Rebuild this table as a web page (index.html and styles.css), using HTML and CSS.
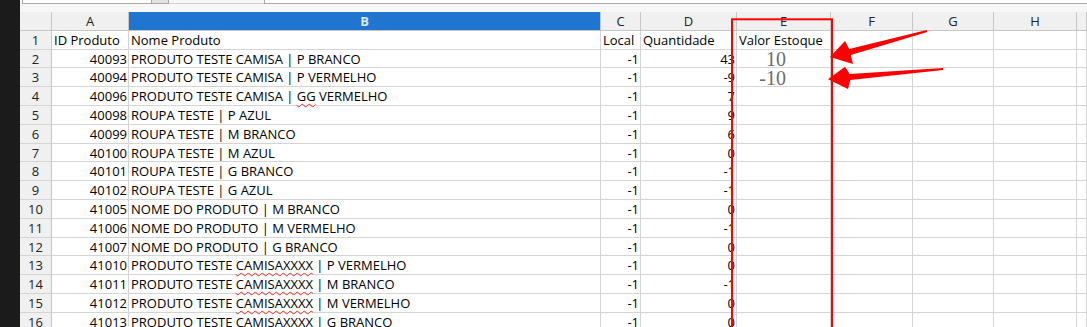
FILE: index.html
```html
<!DOCTYPE html>
<html lang="pt-BR">
<head>
<meta charset="utf-8">
<title>Planilha de estoque</title>
<link rel="stylesheet" href="styles.css">
</head>
<body>
<div class="app">
  <div class="dock"></div>
  <div class="main">
    <div class="toolbar">
      <div class="namebox"></div>
      <div class="dropbtn"></div>
      <div class="tool-gap"></div>
      <div class="formula"></div>
    </div>
    <div class="sheet">
      <div class="corner"></div>
      <div class="colhead">A</div>
      <div class="colhead selected">B</div>
      <div class="colhead">C</div>
      <div class="colhead">D</div>
      <div class="colhead">E</div>
      <div class="colhead">F</div>
      <div class="colhead">G</div>
      <div class="colhead">H</div>
      <div class="colhead"></div>

      <div class="rowhead">1</div>
      <div class="cell">ID Produto</div>
      <div class="cell">Nome Produto</div>
      <div class="cell">Local</div>
      <div class="cell">Quantidade</div>
      <div class="cell">Valor Estoque</div>
      <div class="cell"></div><div class="cell"></div><div class="cell"></div><div class="cell"></div>

      <div class="rowhead">2</div>
      <div class="cell num">40093</div>
      <div class="cell">PRODUTO TESTE CAMISA | P BRANCO</div>
      <div class="cell num">-1</div>
      <div class="cell num">43</div>
      <div class="cell"></div><div class="cell"></div><div class="cell"></div><div class="cell"></div><div class="cell"></div>

      <div class="rowhead">3</div>
      <div class="cell num">40094</div>
      <div class="cell">PRODUTO TESTE CAMISA | P VERMELHO</div>
      <div class="cell num">-1</div>
      <div class="cell num">-9</div>
      <div class="cell"></div><div class="cell"></div><div class="cell"></div><div class="cell"></div><div class="cell"></div>

      <div class="rowhead">4</div>
      <div class="cell num">40096</div>
      <div class="cell">PRODUTO TESTE CAMISA | <span class="typo">GG</span> VERMELHO</div>
      <div class="cell num">-1</div>
      <div class="cell num">7</div>
      <div class="cell"></div><div class="cell"></div><div class="cell"></div><div class="cell"></div><div class="cell"></div>

      <div class="rowhead">5</div>
      <div class="cell num">40098</div>
      <div class="cell">ROUPA TESTE | P AZUL</div>
      <div class="cell num">-1</div>
      <div class="cell num">9</div>
      <div class="cell"></div><div class="cell"></div><div class="cell"></div><div class="cell"></div><div class="cell"></div>

      <div class="rowhead">6</div>
      <div class="cell num">40099</div>
      <div class="cell">ROUPA TESTE | M BRANCO</div>
      <div class="cell num">-1</div>
      <div class="cell num">6</div>
      <div class="cell"></div><div class="cell"></div><div class="cell"></div><div class="cell"></div><div class="cell"></div>

      <div class="rowhead">7</div>
      <div class="cell num">40100</div>
      <div class="cell">ROUPA TESTE | M AZUL</div>
      <div class="cell num">-1</div>
      <div class="cell num">0</div>
      <div class="cell"></div><div class="cell"></div><div class="cell"></div><div class="cell"></div><div class="cell"></div>

      <div class="rowhead">8</div>
      <div class="cell num">40101</div>
      <div class="cell">ROUPA TESTE | G BRANCO</div>
      <div class="cell num">-1</div>
      <div class="cell num">-1</div>
      <div class="cell"></div><div class="cell"></div><div class="cell"></div><div class="cell"></div><div class="cell"></div>

      <div class="rowhead">9</div>
      <div class="cell num">40102</div>
      <div class="cell">ROUPA TESTE | G AZUL</div>
      <div class="cell num">-1</div>
      <div class="cell num">-1</div>
      <div class="cell"></div><div class="cell"></div><div class="cell"></div><div class="cell"></div><div class="cell"></div>

      <div class="rowhead">10</div>
      <div class="cell num">41005</div>
      <div class="cell">NOME DO PRODUTO | M BRANCO</div>
      <div class="cell num">-1</div>
      <div class="cell num">0</div>
      <div class="cell"></div><div class="cell"></div><div class="cell"></div><div class="cell"></div><div class="cell"></div>

      <div class="rowhead">11</div>
      <div class="cell num">41006</div>
      <div class="cell">NOME DO PRODUTO | M VERMELHO</div>
      <div class="cell num">-1</div>
      <div class="cell num">-1</div>
      <div class="cell"></div><div class="cell"></div><div class="cell"></div><div class="cell"></div><div class="cell"></div>

      <div class="rowhead">12</div>
      <div class="cell num">41007</div>
      <div class="cell">NOME DO PRODUTO | G BRANCO</div>
      <div class="cell num">-1</div>
      <div class="cell num">0</div>
      <div class="cell"></div><div class="cell"></div><div class="cell"></div><div class="cell"></div><div class="cell"></div>

      <div class="rowhead">13</div>
      <div class="cell num">41010</div>
      <div class="cell">PRODUTO TESTE <span class="typo">CAMISAXXXX</span> | P VERMELHO</div>
      <div class="cell num">-1</div>
      <div class="cell num">0</div>
      <div class="cell"></div><div class="cell"></div><div class="cell"></div><div class="cell"></div><div class="cell"></div>

      <div class="rowhead">14</div>
      <div class="cell num">41011</div>
      <div class="cell">PRODUTO TESTE <span class="typo">CAMISAXXXX</span> | M BRANCO</div>
      <div class="cell num">-1</div>
      <div class="cell num">-1</div>
      <div class="cell"></div><div class="cell"></div><div class="cell"></div><div class="cell"></div><div class="cell"></div>

      <div class="rowhead">15</div>
      <div class="cell num">41012</div>
      <div class="cell">PRODUTO TESTE <span class="typo">CAMISAXXXX</span> | M VERMELHO</div>
      <div class="cell num">-1</div>
      <div class="cell num">0</div>
      <div class="cell"></div><div class="cell"></div><div class="cell"></div><div class="cell"></div><div class="cell"></div>

      <div class="rowhead">16</div>
      <div class="cell num">41013</div>
      <div class="cell">PRODUTO TESTE <span class="typo">CAMISAXXXX</span> | G BRANCO</div>
      <div class="cell num">-1</div>
      <div class="cell num">0</div>
      <div class="cell"></div><div class="cell"></div><div class="cell"></div><div class="cell"></div><div class="cell"></div>
    </div>
  </div>

  <!-- red markup drawn on top of the sheet -->
  <svg class="marks" width="1087" height="327" viewBox="0 0 1087 327">
    <rect x="732" y="19.3" width="100" height="330" fill="none" stroke="#ff0000" stroke-width="2"/>
    <polygon fill="#ff0000" points="830,57 845,41 849.2,49.1 926.7,30 927.3,32 850.8,54.9 853,64"/>
    <polygon fill="#ff0000" points="828,79.3 845,66.7 849.7,74 943,68 943,70 850.3,80 848,89"/>
    <text class="note" x="786" y="66" text-anchor="end">10</text>
    <text class="note" x="786" y="85" text-anchor="end">-10</text>
  </svg>
</div>
</body>
</html>
```

FILE: styles.css
```css
html, body {
  margin: 0;
  padding: 0;
  background: #ffffff;
}

.app {
  position: relative;
  display: flex;
  width: 1087px;
  height: 327px;
  overflow: hidden;
  font-family: "Open Sans", "Noto Sans", sans-serif;
  font-size: 13px;
  color: #000;
}

.dock {
  flex: 0 0 20px;
  background: #1b1b1b;
}

.main {
  flex: 1;
  display: flex;
  flex-direction: column;
  background: #f7f7f7;
  min-width: 0;
}

/* name box / formula bar, only their bottom edges are in view */
.toolbar {
  display: flex;
  align-items: flex-start;
  height: 12px;
  flex: 0 0 12px;
}

.namebox {
  width: 128px;
  height: 3px;
  margin-left: 2px;
  background: #fff;
  border: 1px solid #a8a8a8;
  border-top: 0;
}

.dropbtn {
  width: 16px;
  height: 3px;
  background: #e2e2e2;
  border: 1px solid #a8a8a8;
  border-top: 0;
  border-left: 0;
}

.tool-gap {
  width: 95px;
  height: 3px;
  border-bottom: 1px solid #d0d0d0;
}

.formula {
  flex: 1;
  height: 3px;
  background: #fff;
  border: 1px solid #a8a8a8;
  border-top: 0;
  border-right: 0;
}

.sheet {
  display: grid;
  grid-template-columns: 32px 77px 472px 40px 96px 94px 82px 81px 83px 1fr;
  grid-template-rows: 18.7px;
  grid-auto-rows: 18.82px;
  background: #fff;
}

.sheet > div {
  box-sizing: border-box;
  border-right: 1px solid #d4d4d4;
  border-bottom: 1px solid #d4d4d4;
  white-space: nowrap;
  overflow: visible;
  line-height: 17.8px;
  padding-top: 1px;
}

.corner,
.colhead {
  background: #f0f0f0;
  border-right-color: #c6c6c6 !important;
  border-bottom-color: #c6c6c6 !important;
}

.colhead {
  text-align: center;
  color: #222;
}

.colhead.selected {
  background: #1f75d0;
  color: #dce9f9;
  font-weight: 700;
}

.rowhead {
  background: #f0f0f0;
  text-align: center;
  color: #222;
  border-right-color: #c6c6c6 !important;
}

.cell {
  padding-left: 2px;
  padding-right: 2px;
}

.cell.num {
  text-align: right;
  padding-right: 1px;
}

.typo {
  text-decoration: underline wavy #e0302a;
  text-decoration-thickness: 1px;
  text-underline-offset: 2px;
}

.marks {
  position: absolute;
  left: 0;
  top: 0;
  pointer-events: none;
}

.note {
  font-family: "Liberation Serif", serif;
  font-size: 20px;
  fill: #6e6e6e;
}
```
